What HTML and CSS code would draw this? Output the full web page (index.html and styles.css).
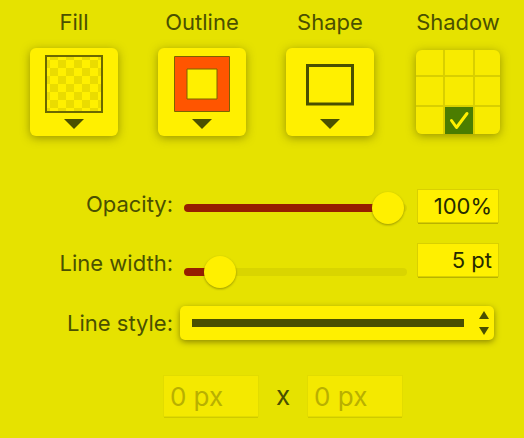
FILE: index.html
```html
<!DOCTYPE html>
<html lang="en">
<head>
<meta charset="utf-8">
<meta name="viewport" content="width=device-width, initial-scale=1">
<title>Shape settings</title>
<link rel="stylesheet" href="styles.css">
</head>
<body>
<form class="panel">
  <div class="tools">
    <div class="tool">
      <label class="tool-name" for="fill">Fill</label>
      <button class="card" id="fill" type="button">
        <svg viewBox="0 0 88 88" aria-hidden="true">
          <defs>
            <pattern id="checks" x="20" y="12" width="16" height="16" patternUnits="userSpaceOnUse">
              <path class="check" d="M8 0h8v8H8zM0 8h8v8H0z"/>
            </pattern>
          </defs>
          <rect x="16" y="8" width="56" height="56" fill="url(#checks)"/>
          <rect class="frame" x="16" y="8" width="56" height="56"/>
          <path class="ink" d="M34 71h20L44 81z"/>
        </svg>
      </button>
    </div>
    <div class="tool">
      <label class="tool-name" for="outline">Outline</label>
      <button class="card" id="outline" type="button">
        <svg viewBox="0 0 88 88" aria-hidden="true">
          <path class="ring" d="M16.500 8.500h55v55h-55zM29 21v30h30v-30z"/>
          <path class="ink" d="M34 71h20L44 81z"/>
        </svg>
      </button>
    </div>
    <div class="tool">
      <label class="tool-name" for="shape">Shape</label>
      <button class="card" id="shape" type="button">
        <svg viewBox="0 0 88 88" aria-hidden="true">
          <rect class="box" x="21.500" y="17.500" width="45" height="38.500"/>
          <path class="ink" d="M34 71h20L44 81z"/>
        </svg>
      </button>
    </div>
    <div class="tool">
      <span class="tool-name" id="shadow">Shadow</span>
      <div class="shadow-grid" role="radiogroup" aria-labelledby="shadow">
        <label class="cell"><input type="radio" name="shadow" aria-label="Top left"></label>
        <label class="cell"><input type="radio" name="shadow" aria-label="Top"></label>
        <label class="cell"><input type="radio" name="shadow" aria-label="Top right"></label>
        <label class="cell"><input type="radio" name="shadow" aria-label="Left"></label>
        <label class="cell"><input type="radio" name="shadow" aria-label="Center"></label>
        <label class="cell"><input type="radio" name="shadow" aria-label="Right"></label>
        <label class="cell"><input type="radio" name="shadow" aria-label="Bottom left"></label>
        <label class="cell"><input type="radio" name="shadow" aria-label="Bottom" checked>
          <svg class="tick" viewBox="0 0 28 28" aria-hidden="true"><path d="M6.500 13.500L11.500 20.500 22 6.500"/></svg>
        </label>
        <label class="cell"><input type="radio" name="shadow" aria-label="Bottom right"></label>
      </div>
    </div>
  </div>

  <div class="row">
    <label class="name" for="opacity">Opacity:</label>
    <input class="slider" id="opacity" type="range" min="0" max="100" value="100" style="--fill: 92%">
    <input class="field" type="text" value="100%" aria-label="Opacity value">
  </div>
  <div class="row row-tall">
    <label class="name" for="width">Line width:</label>
    <input class="slider" id="width" type="range" min="0" max="55" value="5" style="--fill: 16%">
    <input class="field" type="text" value="5 pt" aria-label="Line width value">
  </div>
  <div class="row row-style">
    <label class="name" for="style">Line style:</label>
    <div class="picker">
      <select id="style"><option>Solid</option></select>
      <svg class="arrows" viewBox="0 0 10 24" aria-hidden="true"><path class="ink" d="M5 0l5 8H0zM5 24l5-8H0z"/></svg>
    </div>
  </div>

  <div class="size">
    <input class="dimension" type="text" value="0 px" aria-label="Width" disabled>
    <span>x</span>
    <input class="dimension" type="text" value="0 px" aria-label="Height" disabled>
  </div>
</form>
</body>
</html>
```
FILE: styles.css
```css
:root {
  --back: #e6e200;
  --face: #fff000;
  --ink: #4a5000;
}

* { box-sizing: border-box; }

body {
  margin: 0;
  background: var(--back);
  color: var(--ink);
  font: 22px/28px Inter, "Liberation Sans", sans-serif;
}

input, select, button {
  margin: 0;
  border: 0;
  padding: 0;
  color: inherit;
  font: inherit;
}

.panel { padding: 8px 22px 20px 30px; }

.tools {
  display: flex;
  justify-content: space-between;
  margin-bottom: 54px;
}

.tool {
  display: flex;
  flex-direction: column;
  align-items: center;
  gap: 12px;
  width: 88px;
}

.tool-name { white-space: nowrap; }

.card {
  width: 88px;
  height: 88px;
  border-radius: 6px;
  background: var(--face);
  box-shadow: 0 2px 10px rgba(80, 75, 0, .5);
}

.card svg { display: block; width: 100%; }

.ink { fill: var(--ink); }
.check { fill: #eadc00; }
.frame { fill: none; stroke: #6b6800; stroke-width: 2; }
.ring { fill: #ff5500; fill-rule: evenodd; stroke: #7d6200; }
.box { fill: none; stroke: var(--ink); stroke-width: 3; }

.shadow-grid {
  display: grid;
  grid-template: 25px 28px 27px / 27px 28px 25px;
  gap: 2px;
  margin-top: 2px;
  overflow: hidden;
  border-radius: 6px;
  background: #d9cf00;
  box-shadow: 0 2px 10px rgba(80, 75, 0, .5);
}

.cell { position: relative; background: #f8eb00; }
.cell input { display: block; width: 100%; height: 100%; appearance: none; }
.cell input:checked { background: #4b7d00; }

.tick {
  position: absolute;
  inset: 0;
  fill: none;
  stroke: var(--face);
  stroke-width: 3;
  stroke-linecap: round;
  stroke-linejoin: round;
  pointer-events: none;
}

.row {
  display: grid;
  grid-template-columns: 143px 1fr 80px;
  column-gap: 11px;
  height: 34px;
  margin-right: 4px;
  margin-bottom: 20px;
}

.row-tall { height: 44px; margin-bottom: 18px; }

.name { text-align: right; white-space: nowrap; }
.row-tall .name { padding-top: 5px; }
.row-style .name { align-self: center; }

.slider {
  align-self: end;
  width: 100%;
  height: 32px;
  appearance: none;
  background: none;
}

.slider::-webkit-slider-runnable-track {
  height: 8px;
  border-radius: 4px;
  background: linear-gradient(to right, #961e00 var(--fill), #d9d500 var(--fill));
}

.slider::-webkit-slider-thumb {
  width: 38px;
  height: 38px;
  margin-top: -15px;
  border: 3px solid transparent;
  border-radius: 50%;
  appearance: none;
  background: var(--face) padding-box;
  filter: drop-shadow(0 1px 1px rgba(80, 75, 0, .5));
}

.field {
  width: 100%;
  height: 32px;
  padding-right: 6px;
  background: var(--face);
  box-shadow: 0 0 0 1px #d9d000, 0 2px 0 #b9b200;
  color: #262a00;
  text-align: right;
}

.row-style {
  grid-template-columns: 143px 1fr;
  column-gap: 7px;
  margin-right: 8px;
  margin-bottom: 36px;
}

.picker { position: relative; }

.picker select {
  width: 100%;
  height: 34px;
  border-radius: 5px;
  appearance: none;
  background: linear-gradient(var(--ink), var(--ink)) 12px 13px / calc(100% - 42px) 8px no-repeat var(--face);
  box-shadow: 0 2px 6px rgba(80, 75, 0, .6);
  color: transparent;
}

.arrows {
  position: absolute;
  top: 5px;
  right: 5px;
  width: 10px;
  pointer-events: none;
}

.size {
  display: flex;
  justify-content: center;
  align-items: center;
  gap: 18px;
  margin-left: 34px;
  font-size: 26px;
}

.dimension {
  width: 94px;
  height: 40px;
  padding-left: 6px;
  background: #f4e900;
  box-shadow: 0 0 0 1px #e2dc00, 0 2px 0 #d0ca00;
}

.dimension:disabled { color: #b9b000; }
```
